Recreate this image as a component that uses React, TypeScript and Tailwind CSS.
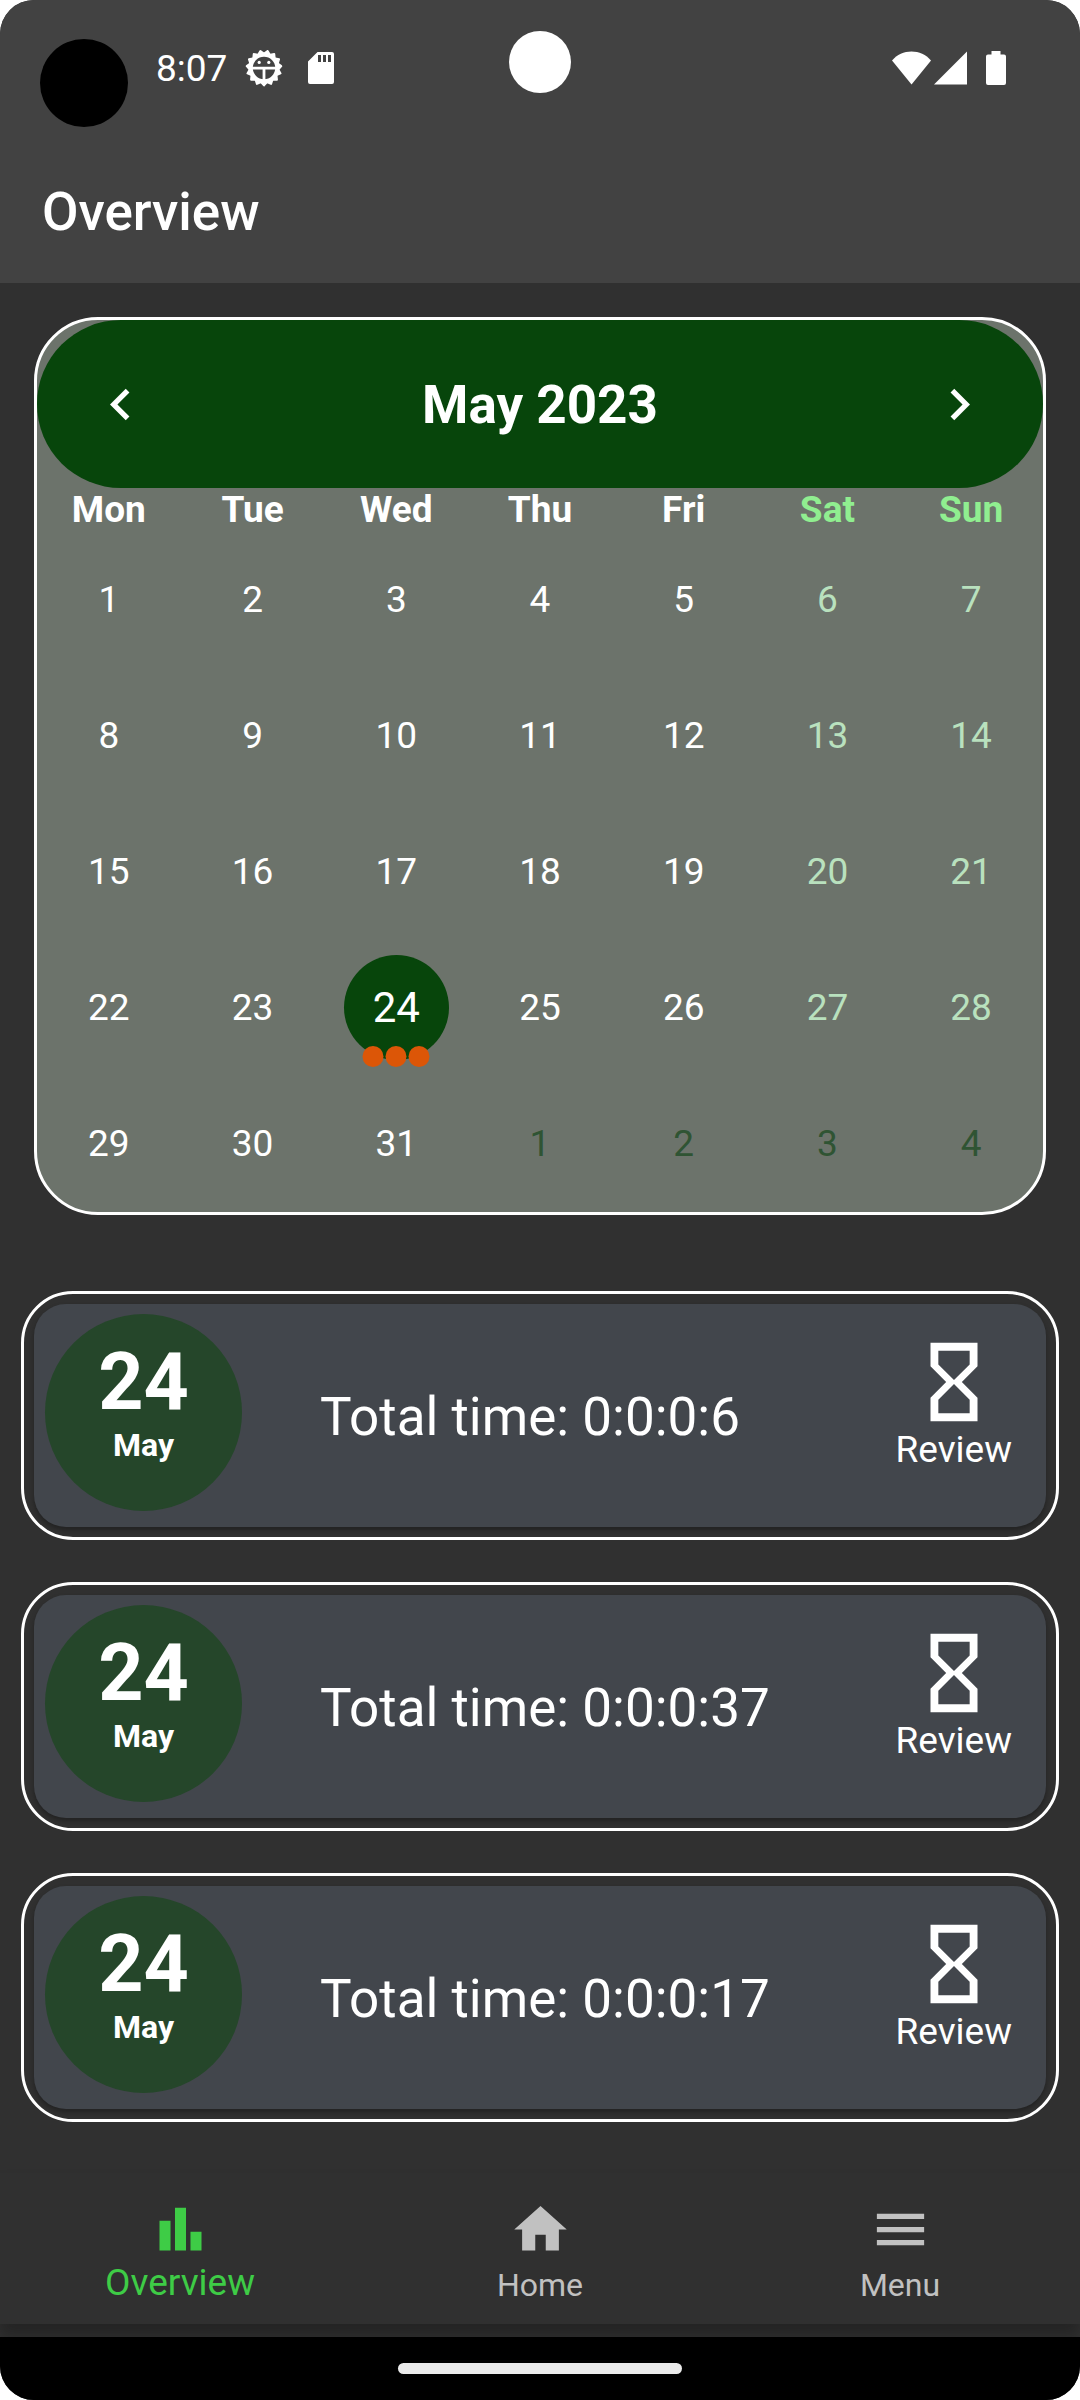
import React from "react";

const weekdays = ["Mon", "Tue", "Wed", "Thu", "Fri", "Sat", "Sun"];

const days = Array.from({ length: 35 }, (_, i) => ({
  day: i < 31 ? i + 1 : i - 30,
  outside: i >= 31,
  weekend: i % 7 > 4,
}));

const entries = [
  { id: 1, day: "24", month: "May", total: "0:0:0:6" },
  { id: 2, day: "24", month: "May", total: "0:0:0:37" },
  { id: 3, day: "24", month: "May", total: "0:0:0:17" },
];

function DebugIcon() {
  const teeth = Array.from({ length: 15 }, (_, i) => i * 24);
  return (
    <svg className="size-[38px]" viewBox="-19 -19 38 38" fill="none" stroke="white" aria-hidden="true">
      <circle r="13.2" strokeWidth="4" />
      {teeth.map((a) => (
        <path key={a} d="M-2.6 14.5 0 17.4 2.6 14.5z" fill="white" strokeWidth="2" strokeLinejoin="round" transform={`rotate(${a})`} />
      ))}
      <path d="M-12.5 0.2H12.5M0 0.2V13" strokeWidth="2.8" />
      <circle cx="-4.8" cy="-5.6" r="1.6" fill="white" stroke="none" />
      <circle cx="4.8" cy="-5.6" r="1.6" fill="white" stroke="none" />
    </svg>
  );
}

function StatusBar() {
  return (
    <div className="relative flex h-[136px] items-center pr-[74px] pl-[156px]">
      <span className="absolute top-[39px] left-10 size-[88px] rounded-full bg-black" />
      <span className="absolute top-[31px] left-1/2 size-[62px] -translate-x-1/2 rounded-full bg-white" />
      <span className="pt-0.5 text-[37px] leading-[44px]">8:07</span>
      <div className="ml-[18px] flex items-center gap-[25px]">
        <DebugIcon />
        <svg className="h-8 w-[26px]" viewBox="0 0 26 32" aria-hidden="true">
          <path
            fill="white"
            fillRule="evenodd"
            d="M9.5 0H24a2 2 0 0 1 2 2v28a2 2 0 0 1-2 2H2a2 2 0 0 1-2-2V9.500zM10 3v7h3V3zM15 3v7h3V3zM20 3v7h3V3z"
          />
        </svg>
      </div>
      <div className="ml-auto flex items-center">
        <svg className="h-[34px] w-[39px]" viewBox="0 0 39 34" aria-hidden="true">
          <path fill="white" d="M0 9.500C5 3.500 12 .5 19.500.5S34 3.500 39 9.500L19.500 33.500z" />
        </svg>
        <svg className="ml-[3px] h-[34px] w-[33px]" viewBox="0 0 33 34" aria-hidden="true">
          <path fill="white" d="M0 33.500H33V.5z" />
        </svg>
        <svg className="ml-[19px] h-[34px] w-5" viewBox="0 0 20 34" aria-hidden="true">
          <path fill="white" d="M5.500 0h9v3.500H18a2 2 0 0 1 2 2V32a2 2 0 0 1-2 2H2a2 2 0 0 1-2-2V5.500a2 2 0 0 1 2-2h3.500z" />
        </svg>
      </div>
    </div>
  );
}

function Chevron({ d }: { d: string }) {
  return (
    <svg className="size-[63px]" viewBox="0 0 24 24" fill="white" aria-hidden="true">
      <path d={d} />
    </svg>
  );
}

function Calendar() {
  return (
    <section className="mx-[34px] rounded-[64px] border-[3px] border-white bg-[#6c736b]">
      <div className="flex h-[168px] items-center justify-between rounded-full bg-[#07450b] px-[52px]">
        <button aria-label="Previous month">
          <Chevron d="M15.41 7.41 14 6l-6 6 6 6 1.410-1.410L10.830 12z" />
        </button>
        <h2 className="pt-0.5 text-[53px] leading-[62px] font-bold">May 2023</h2>
        <button aria-label="Next month">
          <Chevron d="M10 6 8.590 7.410 13.170 12l-4.580 4.590L10 18l6-6z" />
        </button>
      </div>
      <div className="grid grid-cols-7 text-center text-[37px] leading-[43px] font-bold">
        {weekdays.map((w, i) => (
          <span key={w} className={i > 4 ? "text-[#90ee90]" : ""}>
            {w}
          </span>
        ))}
      </div>
      <div className="grid h-[681px] grid-cols-7 grid-rows-5 text-[37px] leading-[43px]">
        {days.map(({ day, outside, weekend }, i) =>
          day === 24 ? (
            <div key={i} className="relative flex items-center justify-center">
              <button className="size-[105px] rounded-full bg-[#07450b] text-[42px] leading-[48px]">24</button>
              <span className="absolute bottom-[9px] left-1/2 flex -translate-x-1/2 gap-0.5">
                <i className="size-[21px] rounded-full bg-[#dc5607]" />
                <i className="size-[21px] rounded-full bg-[#dc5607]" />
                <i className="size-[21px] rounded-full bg-[#dc5607]" />
              </span>
            </div>
          ) : (
            <button key={i} className={outside ? "text-[#2f5433]" : weekend ? "text-[#b9e1be]" : ""}>
              {day}
            </button>
          )
        )}
      </div>
    </section>
  );
}

function EntryCard({ day, month, total }: { day: string; month: string; total: string }) {
  return (
    <li className="rounded-[52px] border-[3px] border-white p-2.5">
      <div className="flex h-[223px] items-center rounded-[32px] bg-[#42464c] pr-[34px] pl-[11px] shadow-[0_3px_5px_rgba(0,0,0,0.3)]">
        <div className="mt-2.5 flex size-[197px] shrink-0 flex-col items-center self-start rounded-full bg-[#25462a] pt-7 font-bold">
          <span className="text-[79px] leading-[80px]">{day}</span>
          <span className="text-[32px] leading-[46px]">{month}</span>
        </div>
        <p className="ml-[78px] pt-[3px] text-[53px] leading-[62px]">Total time: {total}</p>
        <button className="mt-[31px] ml-auto flex flex-col items-center self-start text-[37px] leading-[42px]">
          <svg className="size-[94px]" viewBox="0 0 24 24" fill="white" aria-hidden="true">
            <path d="M6 2v6h.01L6 8.010 10 12l-4 4 .01.01H6V22h12v-5.990h-.01L18 16l-4-4 4-3.990-.01-.01H18V2H6zm10 14.500V20H8v-3.500l4-4 4 4zm-4-5-4-4V4h8v3.500l-4 4z" />
          </svg>
          Review
        </button>
      </div>
    </li>
  );
}

const tabs = [
  { label: "Overview", active: true, d: "M4 8.700h4.200V20H4zM9.900 3.700h4.200V20H9.900zM15.800 12.900H20V20h-4.200z" },
  { label: "Home", active: false, d: "M10 20v-6h4v6h5v-8h3L12 3 2 12h3v8z" },
  { label: "Menu", active: false, d: "M3 18h18v-2H3zm0-5h18v-2H3zm0-7v2h18V6z" },
];

export default function App() {
  return (
    <div className="min-h-screen bg-white font-[Roboto,sans-serif] text-white">
      <div className="flex min-h-screen flex-col overflow-hidden rounded-[34px] bg-[#303030]">
        <header className="bg-[#424242]">
          <StatusBar />
          <h1 className="px-[42px] pt-[45px] pb-10 text-[53px] leading-[62px] font-medium">Overview</h1>
        </header>
        <main className="flex-1 pt-[34px]">
          <Calendar />
          <ul className="mx-[21px] mt-[76px] flex flex-col gap-[42px]">
            {entries.map((e) => (
              <EntryCard key={e.id} day={e.day} month={e.month} total={e.total} />
            ))}
          </ul>
        </main>
        <nav className="relative grid grid-cols-3 bg-[#303030] pt-[25px] pb-[15px] shadow-[0_12px_14px_rgba(0,0,0,0.25)]">
          {tabs.map((t) => (
            <a
              key={t.label}
              href={`#${t.label.toLowerCase()}`}
              className={
                t.active
                  ? "flex flex-col items-center text-[37px] leading-[44px] text-[#3ecc46]"
                  : "flex flex-col items-center text-[32px] leading-[48px] text-[#c1c1c1]"
              }
            >
              <svg className="size-[63px]" viewBox="0 0 24 24" fill="currentColor" aria-hidden="true">
                <path d={t.d} />
              </svg>
              {t.label}
            </a>
          ))}
        </nav>
        <footer className="relative mt-[13px] flex h-[63px] justify-center bg-black pt-[26px]">
          <span className="h-[11px] w-[284px] rounded-full bg-[#ebebeb]" />
        </footer>
      </div>
    </div>
  );
}
